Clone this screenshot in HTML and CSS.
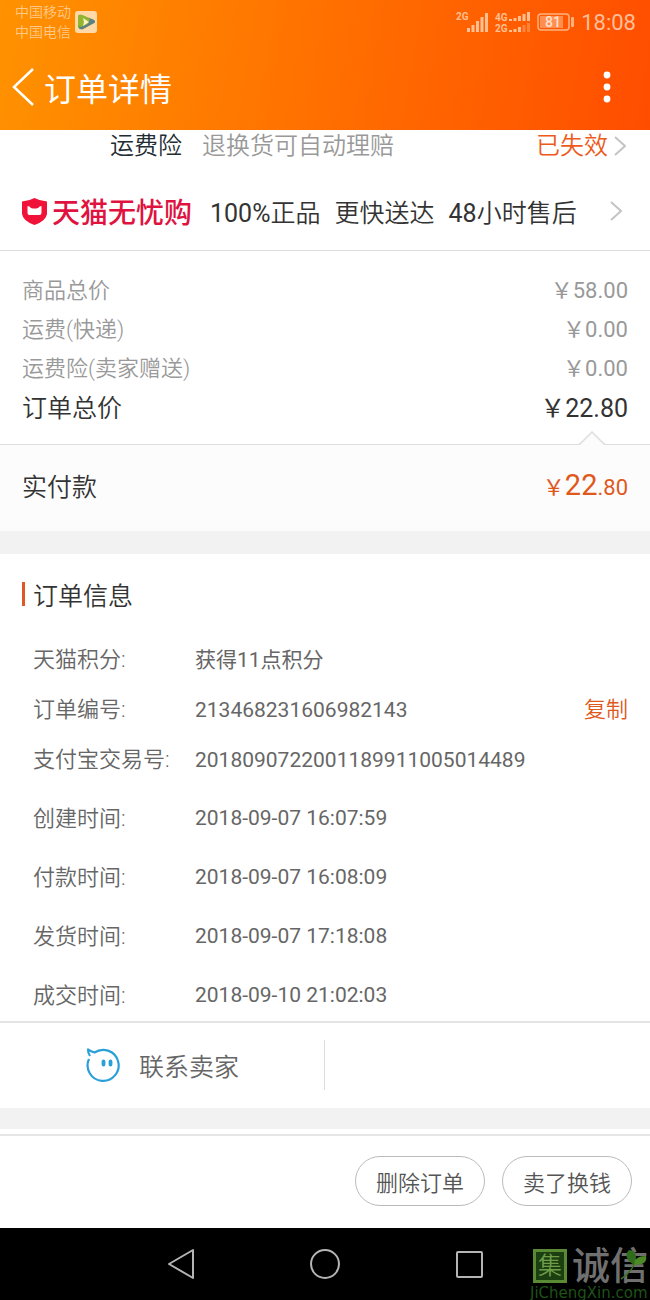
FILE: index.html
```html
<!DOCTYPE html>
<html lang="zh-CN">
<head>
<meta charset="utf-8">
<meta name="viewport" content="width=device-width, initial-scale=1">
<title>订单详情</title>
<link rel="stylesheet" href="styles.css">
</head>
<body>
<header class="header">
  <div class="status">
    <div class="carriers"><span>中国移动</span><span>中国电信</span></div>
    <svg class="status-app" width="22" height="22" viewBox="0 0 22 22" aria-hidden="true">
      <rect width="22" height="22" rx="3" fill="#ffd9a8"/>
      <path d="M3 5Q4 3 7 4L19 9Q21 11 19 12L8 18Q4 19 3 16Z" fill="#74a832"/>
      <path d="M14 7l5 2q2 2 0 3L8 18q-3 1-4-1Z" fill="#5d7f86"/>
      <path d="M3 5Q4 3 7 4l8 4-2 5-7 3-3-2Z" fill="#93b52f"/>
      <path d="M8 7l6 4-6 4 1-4Z" fill="#fff3c8"/>
    </svg>
    <div class="indicators">
      <svg width="33" height="22" viewBox="0 0 33 22" fill="#ffbf91" aria-label="2G">
        <text x="0" y="9" class="net">2G</text>
        <path d="M11 17h3v4h-3zM15.500 14h3v7h-3zM20 10h3v11h-3zM24.500 6h3v15h-3zM29 2h3v19h-3z"/>
      </svg>
      <svg width="36" height="22" viewBox="0 0 36 22" fill="#ffbf91" aria-label="4G 2G">
        <text x="0" y="10" class="net">4G</text><text x="0" y="21" class="net">2G</text>
        <path d="M14 8h3v2h-3zM18.500 7h3v3h-3zM23 5h3v5h-3zM27.500 3h3v7h-3zM32 1h3v9h-3zM14 19h3v2h-3zM18.500 18h3v3h-3zM23 16h3v5h-3z"/>
        <path opacity=".4" d="M27.500 14h3v7h-3zM32 12h3v9h-3z"/>
      </svg>
      <svg width="38" height="18" viewBox="0 0 38 18" aria-label="81%">
        <rect x="1" y="1" width="31" height="16" rx="3" fill="none" stroke="#ffb27f" stroke-width="1.500"/>
        <rect x="3" y="3" width="23" height="12" fill="#ff8f50"/>
        <rect x="34" y="4" width="3" height="10" rx="1" fill="#ffb27f"/>
        <text x="16" y="14" class="charge" text-anchor="middle">81</text>
      </svg>
      <time class="clock">18:08</time>
    </div>
  </div>
  <div class="titlebar">
    <button class="icon-button" aria-label="返回">
      <svg width="22" height="40" viewBox="0 0 22 40"><path d="M21 2L2 20l19 18" fill="none" stroke="#fff" stroke-width="2.500"/></svg>
    </button>
    <h1 class="title">订单详情</h1>
    <button class="icon-button more" aria-label="更多">
      <svg width="8" height="32" viewBox="0 0 8 32" fill="#fff"><circle cx="4" cy="4" r="3.400"/><circle cx="4" cy="16" r="3.400"/><circle cx="4" cy="28" r="3.400"/></svg>
    </button>
  </div>
</header>

<main>
  <a class="insurance" href="#insurance">
    <span class="insurance-name">运费险</span>
    <span class="insurance-note">退换货可自动理赔</span>
    <span class="insurance-state">已失效</span>
    <svg width="12" height="20" viewBox="0 0 12 20"><path d="M1 1l10 9-10 9" fill="none" stroke="#c4c4c4" stroke-width="2"/></svg>
  </a>
  <a class="promise" href="#promise">
    <svg width="27" height="29" viewBox="0 0 27 29" aria-hidden="true">
      <path d="M13.500 1Q19 4 26 4.500V17Q25 24 13.500 28 2 24 1 17V4.500Q8 4 13.500 1Z" fill="#f01238"/>
      <path d="M6.500 9q2 0 3.500 2 3.500 1 7 0 1.500-2 3.500-2v7q0 2-2 2h-10q-2 0-2-2Z" fill="#fff"/>
    </svg>
    <span class="promise-brand">天猫无忧购</span>
    <span class="promise-points"><span><span class="figure">100%</span>正品</span><span>更快送达</span><span><span class="figure">48</span>小时售后</span></span>
    <svg class="promise-arrow" width="12" height="20" viewBox="0 0 12 20"><path d="M1 1l10 9-10 9" fill="none" stroke="#c4c4c4" stroke-width="2"/></svg>
  </a>

  <dl class="prices">
    <div class="price"><dt>商品总价</dt><dd>￥58.00</dd></div>
    <div class="price"><dt>运费(快递)</dt><dd>￥0.00</dd></div>
    <div class="price"><dt>运费险(卖家赠送)</dt><dd>￥0.00</dd></div>
    <div class="price total"><dt>订单总价</dt><dd>￥22.80</dd></div>
  </dl>
  <section class="paid">
    <svg class="paid-notch" width="26" height="14" viewBox="0 0 26 14"><path d="M1 13L13 1l12 12v1H1Z" fill="#fcfcfc"/><path d="M0 13h1L13 1l12 12h1" fill="none" stroke="#dedede" stroke-width="1.500"/></svg>
    <span>实付款</span>
    <span class="paid-amount">￥<b class="paid-whole">22</b>.80</span>
  </section>

  <section class="info">
    <h2 class="info-title">订单信息</h2>
    <dl class="details">
      <div class="detail"><dt>天猫积分:</dt><dd>获得11点积分</dd></div>
      <div class="detail"><dt>订单编号:</dt><dd>213468231606982143</dd><dd class="detail-action"><button class="copy">复制</button></dd></div>
      <div class="detail"><dt>支付宝交易号:</dt><dd>2018090722001189911005014489</dd></div>
      <div class="detail spaced"><dt>创建时间:</dt><dd>2018-09-07 16:07:59</dd></div>
      <div class="detail spaced"><dt>付款时间:</dt><dd>2018-09-07 16:08:09</dd></div>
      <div class="detail spaced"><dt>发货时间:</dt><dd>2018-09-07 17:18:08</dd></div>
      <div class="detail spaced"><dt>成交时间:</dt><dd>2018-09-10 21:02:03</dd></div>
    </dl>
  </section>

  <section class="contact">
    <button class="contact-seller">
      <svg width="36" height="36" viewBox="0 0 36 36" fill="none" stroke="#2a9fd8" stroke-width="2.200" aria-hidden="true">
        <path d="M4 12A15.500 15.500 0 1 0 9.500 5.500Q6 4.500 3 2.500 3 6 5 9" stroke-linejoin="round"/>
        <path d="M18.500 14.500v3M25.500 14.500v3" stroke-width="3.800" stroke-linecap="round"/>
      </svg>
      联系卖家
    </button>
  </section>
</main>

<footer class="actions">
  <button class="action">删除订单</button>
  <button class="action">卖了换钱</button>
</footer>

<nav class="navbar">
  <button class="nav-button" aria-label="返回"><svg width="32" height="32" viewBox="0 0 32 32"><path d="M28 2v28L4 16Z"/></svg></button>
  <button class="nav-button" aria-label="主屏幕"><svg width="32" height="32" viewBox="0 0 32 32"><circle cx="16" cy="16" r="14"/></svg></button>
  <button class="nav-button" aria-label="最近任务"><svg width="32" height="32" viewBox="0 0 32 32"><rect x="4" y="4" width="25" height="25" rx="1"/></svg></button>
  <div class="watermark">
    <div class="mark-top">
      <span class="mark-seal">集</span>
      <span class="mark-name">诚信</span>
    </div>
    <span class="mark-site">JiChengXin.com</span>
    <svg class="mark-leaf" width="28" height="32" viewBox="0 0 28 32"><path d="M1 31Q9 26 14 17" fill="none" stroke="#37721f" stroke-width="1.500"/><path d="M14 17Q2 9 9 2q7 0 7 8Z" fill="#2f6d1c"/><path d="M14 17Q14 8 26 8q2 9-12 9Z" fill="#4b8a24"/></svg>
  </div>
</nav>
</body>
</html>
```
FILE: styles.css
```css
* {
  box-sizing: border-box;
}

body {
  margin: 0;
  background: #fff;
  color: #333;
  font-family: Roboto, "Noto Sans CJK SC", sans-serif;
  font-size: 22px;
  font-weight: 350;
}

button {
  padding: 0;
  border: 0;
  background: none;
  color: inherit;
  font: inherit;
}

a {
  color: inherit;
  text-decoration: none;
}

h1, h2, dl, dd {
  margin: 0;
}

svg {
  display: block;
  flex: none;
}

.header {
  background: linear-gradient(100deg, #ff9200, #ff4d00);
  color: #fff;
}

.status {
  display: flex;
  align-items: center;
  height: 44px;
  padding: 0 14px 0 15px;
}

.carriers {
  display: flex;
  flex-direction: column;
  color: #ffc98a;
  font-size: 14px;
  line-height: 20px;
}

.status-app {
  margin-left: 4px;
}

.indicators {
  display: flex;
  align-items: center;
  gap: 6px;
  margin-left: auto;
}

.net {
  font: 700 10px Roboto, sans-serif;
}

.charge {
  fill: #ffe0cc;
  font: 500 14px Roboto, sans-serif;
}

.clock {
  color: #ffbf9a;
  font-size: 22px;
  font-weight: 400;
}

.titlebar {
  display: flex;
  align-items: center;
  height: 86px;
  padding: 0 39px 0 12px;
}

.title {
  margin-left: 10px;
  font-size: 32px;
  font-weight: 400;
}

.more {
  margin-left: auto;
}

.insurance {
  display: flex;
  align-items: center;
  padding: 0 24px 10px 110px;
  font-size: 24px;
  line-height: 32px;
}

.insurance-name {
  color: #222c33;
}

.insurance-note {
  margin-left: 20px;
  color: #999;
}

.insurance-state {
  margin: 0 6px 0 auto;
  color: #ed5a1c;
}

.promise {
  display: flex;
  align-items: center;
  height: 79px;
  padding: 0 28px 0 21px;
  border-bottom: 1px solid #ddd;
  font-size: 25px;
}

.promise-brand {
  margin-left: 4px;
  color: #e0123f;
  font-size: 28px;
  font-weight: 500;
}

.promise-points {
  display: flex;
  gap: 14px;
  margin-left: 18px;
}

.figure {
  font-weight: 400;
}

.promise-arrow {
  margin-left: auto;
}

.prices {
  padding: 20px 22px 14px;
  border-bottom: 1px solid #dedede;
}

.price {
  display: flex;
  justify-content: space-between;
  color: #999;
  line-height: 39px;
}

.price dd {
  font-weight: 400;
}

.total {
  color: #333;
  font-size: 25px;
  line-height: 42px;
}

.paid {
  position: relative;
  display: flex;
  align-items: center;
  justify-content: space-between;
  height: 86px;
  padding: 0 22px 6px;
  background: #fcfcfc;
  font-size: 25px;
}

.paid-notch {
  position: absolute;
  top: -14px;
  right: 45px;
}

.paid-amount {
  color: #e0591c;
  font-size: 22px;
  font-weight: 400;
}

.paid-whole {
  font-size: 29px;
  font-weight: 400;
}

.info {
  border-top: 23px solid #f2f2f2;
  border-bottom: 2px solid #e4e4e4;
}

.info-title {
  display: flex;
  align-items: center;
  gap: 8px;
  height: 80px;
  padding-left: 22px;
  font-size: 25px;
  font-weight: 350;
}

.info-title::before {
  width: 3px;
  height: 24px;
  background: #dd5a25;
  content: "";
}

.details {
  padding-top: 1px;
  color: #666;
}

.detail {
  display: grid;
  grid-template-columns: 162px 1fr auto;
  padding: 0 22px 0 33px;
  line-height: 50px;
}

.detail dd {
  font-size: 21px;
  font-weight: 400;
}

.detail .detail-action {
  color: #e0591c;
  font-size: 22px;
  font-weight: 350;
}

.spaced {
  padding-top: 8px;
  line-height: 51px;
}

.contact {
  display: grid;
  grid-template-columns: 1fr 1fr;
  padding: 17px 0 18px;
  border-bottom: 21px solid #f2f2f2;
}

.contact-seller {
  display: flex;
  align-items: center;
  justify-content: center;
  gap: 18px;
  height: 50px;
  border-right: 1px solid #ddd;
  color: #666;
  font-size: 25px;
}

.actions {
  display: flex;
  justify-content: flex-end;
  gap: 17px;
  margin-top: 5px;
  padding: 20px 18px 22px;
  border-top: 2px solid #e6e6e6;
}

.action {
  width: 130px;
  height: 50px;
  border: 1px solid #bbb;
  border-radius: 25px;
  color: #555;
}

.navbar {
  position: relative;
  display: flex;
  justify-content: center;
  gap: 112px;
  height: 72px;
  background: #000;
}

.nav-button svg {
  fill: none;
  stroke: #b4b4b4;
  stroke-width: 2;
  stroke-linejoin: round;
}

.watermark {
  position: absolute;
  right: 0;
  bottom: 0;
  width: 120px;
}

.mark-top {
  display: flex;
  align-items: center;
  gap: 5px;
  padding: 0 0 2px 3px;
}

.mark-seal {
  width: 34px;
  height: 34px;
  border: 3px solid #5b8a35;
  background: #1c3f12;
  color: #6f9c48;
  font-size: 24px;
  line-height: 28px;
  text-align: center;
}

.mark-name {
  color: #707070;
  font-size: 38px;
  font-weight: 500;
  line-height: 36px;
}

.mark-site {
  display: block;
  color: #1f5216;
  font: 15px/14px "DejaVu Sans", sans-serif;
}

.mark-leaf {
  position: absolute;
  top: 0;
  right: 2px;
}
```
